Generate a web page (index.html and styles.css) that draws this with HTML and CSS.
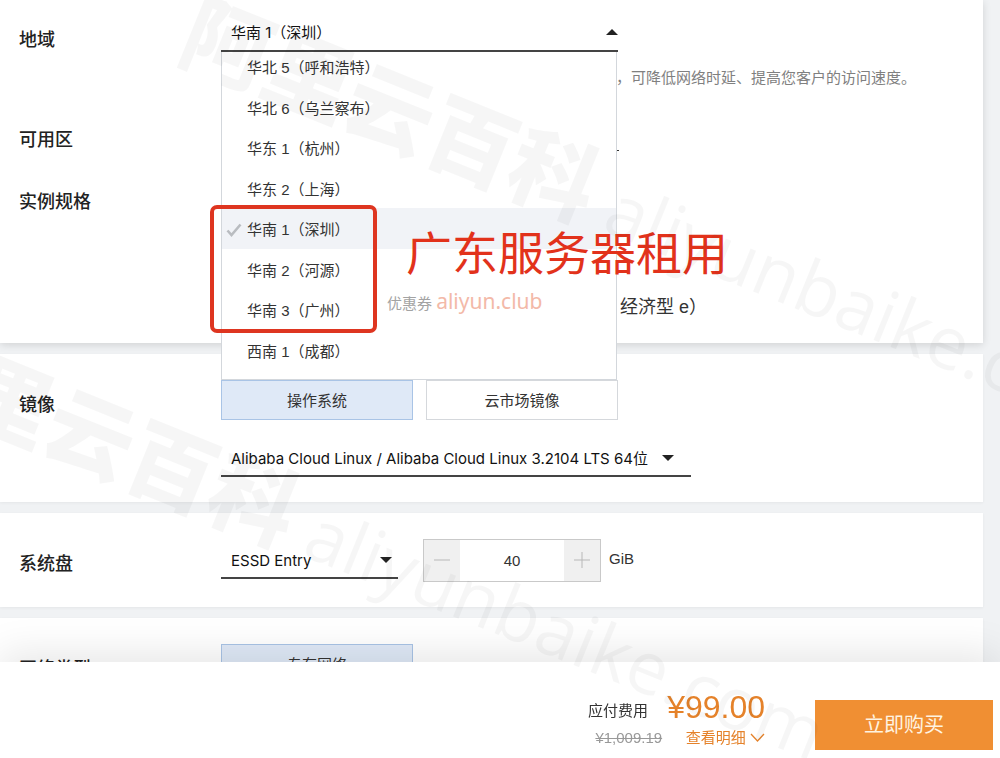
FILE: index.html
```html
<!DOCTYPE html>
<html lang="zh-CN">
    <head>
        <meta charset="UTF-8">
        <title>云服务器购买</title>
        <link rel="stylesheet" href="styles.css">
    </head>
    <body>
        <main class="page">
            <section class="card card-region">
                <div class="row">
                    <label class="label" for="region">地域</label>
                    <div class="field">
                        <div class="region">
                            <select class="select open" id="region">
                                <option>华南 1（深圳）</option>
                            </select>
                            <!--展开的地域列表-->
                            <div class="dropdown">
                                <ul class="options">
                                    <li>华北 5（呼和浩特）</li>
                                    <li>华北 6（乌兰察布）</li>
                                    <li>华东 1（杭州）</li>
                                    <li>华东 2（上海）</li>
                                    <li class="selected">
                                        <svg class="check" viewBox="0 0 16 14" width="16" height="14"><path d="M1.500 7.500l4 4.500L14.500 1.500" fill="none" stroke="#b9bcc0" stroke-width="2.600"/></svg>华南 1（深圳）
                                    </li>
                                    <li>华南 2（河源）</li>
                                    <li>华南 3（广州）</li>
                                    <li>西南 1（成都）</li>
                                </ul>
                            </div>
                        </div>
                        <p class="side tip">，可降低网络时延、提高您客户的访问速度。</p>
                    </div>
                </div>
                <div class="row">
                    <span class="label">可用区</span>
                    <div class="side"><span class="zone-line"></span></div>
                </div>
                <div class="row">
                    <span class="label">实例规格</span>
                    <p class="side spec">经济型 e）</p>
                </div>
            </section>

            <section class="card">
                <div class="row">
                    <label class="label" for="image">镜像</label>
                    <div class="field">
                        <div class="tabs">
                            <button class="tab active" type="button">操作系统</button>
                            <button class="tab" type="button">云市场镜像</button>
                        </div>
                        <select class="select select-image" id="image">
                            <option>Alibaba Cloud Linux / Alibaba Cloud Linux 3.2104 LTS 64位</option>
                        </select>
                    </div>
                </div>
            </section>

            <section class="card">
                <div class="row">
                    <label class="label" for="disk">系统盘</label>
                    <div class="field disk">
                        <select class="select select-disk" id="disk">
                            <option>ESSD Entry</option>
                        </select>
                        <div class="stepper">
                            <button type="button" aria-label="减少"><svg viewBox="0 0 16 16" width="16" height="16"><path d="M0 8h16" stroke="#b8b8b8"/></svg></button>
                            <input type="text" value="40" aria-label="系统盘容量">
                            <button type="button" aria-label="增加"><svg viewBox="0 0 16 16" width="16" height="16"><path d="M0 8h16M8 0v16" stroke="#b8b8b8"/></svg></button>
                        </div>
                        <span class="unit">GiB</span>
                    </div>
                </div>
            </section>

            <section class="card">
                <div class="row">
                    <span class="label">网络类型</span>
                    <div class="tabs">
                        <button class="tab active" type="button">专有网络</button>
                    </div>
                </div>
            </section>
        </main>

        <footer class="bar">
            <div class="fee">
                <span class="fee-name">应付费用</span>
                <strong class="price">¥99.00</strong>
                <del class="old">¥1,009.19</del>
                <a class="detail" href="#">查看明细
                    <svg viewBox="0 0 15 10" width="15" height="10"><path d="M1 1l6.500 7L14 1" fill="none" stroke="#e5822a" stroke-width="1.300"/></svg>
                </a>
            </div>
            <button class="buy" type="button">立即购买</button>
        </footer>

        <!--标注-->
        <div class="mark"></div>
        <p class="headline">广东服务器租用</p>
        <p class="coupon">优惠券 <span>aliyun.club</span></p>

        <!--水印-->
        <div class="watermark" aria-hidden="true">
            <p class="wm-first"><b>阿里云百科</b> aliyunbaike.com</p>
            <p class="wm-second"><b>阿里云百科</b> aliyunbaike.com</p>
        </div>
    </body>
</html>
```
FILE: styles.css
```css
*{
    margin: 0;
    padding: 0;
    box-sizing: border-box;
}
body{
    height: 100vh;
    overflow: hidden;
    position: relative;
    background-color: #f0f2f4;
    color: #333;
    font: 15px/24px "Liberation Sans", "Noto Sans CJK SC", sans-serif;
}
button, input, select{
    font: inherit;
    color: inherit;
}
ul{
    list-style: none;
}

/* 配置卡片 */
.page{
    display: flex;
    flex-direction: column;
    gap: 11px;
    padding-right: 17px;
}
.card{
    display: flex;
    flex-direction: column;
    gap: 38px;
    padding: 26px 0 25px 19px;
    background-color: #fff;
    box-shadow: 0 1px 3px rgba(0,0,0,0.05);
}
.card-region{
    gap: 37px;
    padding-top: 15px;
    padding-bottom: 24px;
    box-shadow: 0 2px 8px rgba(0,0,0,0.13);
}
.row{
    display: grid;
    grid-template-columns: 202px 1fr;
}
.label{
    padding-top: 1px;
    font-size: 18px;
    font-weight: 500;
    color: #222;
}
.row:first-child .label{
    padding-top: 13px;
}
.side{
    padding-left: 395px;
}
.tip{
    margin-top: 14px;
    color: #808080;
}
.spec{
    margin-top: 106px;
    padding-left: 399px;
    font-size: 18px;
}
.zone-line{
    display: block;
    width: 3px;
    height: 24px;
    border-bottom: 1px solid #333;
}

/* 下拉框 */
.select{
    display: block;
    width: 100%;
    height: 37px;
    padding: 2px 30px 0 10px;
    border: 0;
    border-bottom: 2px solid #444;
    border-radius: 0;
    appearance: none;
    background: url("data:image/svg+xml,%3Csvg xmlns='http://www.w3.org/2000/svg' width='12' height='6'%3E%3Cpath d='M0 0h12L6 6z' fill='%23222'/%3E%3C/svg%3E") no-repeat right 6px center;
    font-family: Inter, "Noto Sans CJK SC", sans-serif;
    color: #111;
}
.select.open{
    padding-top: 0;
    background-image: url("data:image/svg+xml,%3Csvg xmlns='http://www.w3.org/2000/svg' width='12' height='6'%3E%3Cpath d='M0 6h12L6 0z' fill='%23222'/%3E%3C/svg%3E");
    background-position: right 0 top 14px;
}
.region{
    position: relative;
    max-width: 397px;
}
.dropdown{
    position: absolute;
    top: 37px;
    left: 0;
    z-index: 2;
    width: 396px;
    height: 328px;
    overflow: hidden;
    background-color: #fff;
    border: 1px solid #d3d7dc;
    border-top: 0;
}
.options{
    display: flex;
    flex-direction: column;
    height: 324px;
    margin-top: -6px;
}
.options li{
    display: flex;
    flex: 1;
    align-items: center;
    padding: 4px 0 0 25px;
}
.options .selected{
    padding-left: 4px;
    gap: 5px;
    background-color: #f1f3f7;
}

.tabs{
    display: flex;
    gap: 13px;
}
.tab{
    width: 192px;
    height: 40px;
    padding-top: 2px;
    background-color: #fff;
    border: 1px solid #d5d8dc;
}
.tab.active{
    background-color: #dfe9f7;
    border-color: #a9c4e6;
}
.select-image{
    max-width: 470px;
    margin-top: 20px;
    background-position: right 17px center;
}

/* 系统盘 */
.disk{
    display: flex;
    align-items: center;
}
.select-disk{
    width: 177px;
}
.stepper{
    display: flex;
    height: 43px;
    margin: 0 8px 0 25px;
    border: 1px solid #c9c9c9;
}
.stepper button{
    width: 36px;
    padding-bottom: 4px;
    border: 0;
    background-color: #f0f0f0;
}
.stepper svg{
    vertical-align: middle;
}
.stepper input{
    width: 104px;
    border: 0;
    text-align: center;
}
.unit{
    padding-bottom: 3px;
}

/* 底部结算栏 */
.bar{
    position: fixed;
    right: 0;
    bottom: 0;
    left: 0;
    z-index: 3;
    display: flex;
    justify-content: flex-end;
    align-items: flex-end;
    gap: 50px;
    height: 96px;
    padding: 0 7px 8px 0;
    background-color: #fff;
    box-shadow: 0 -8px 40px rgba(0,0,0,0.1);
}
.fee{
    display: grid;
    grid-template-columns: auto auto;
    justify-items: end;
    align-items: center;
    column-gap: 5px;
}
.price{
    font-size: 32px;
    line-height: 38px;
    font-weight: 400;
    color: #e5822a;
}
.fee-name{
    padding: 8px 14px 0 0;
}
.old{
    color: #999;
}
.detail{
    color: #e5822a;
    text-decoration: none;
}
.buy{
    width: 178px;
    height: 50px;
    border: 0;
    background-color: #f08f33;
    color: #fff3e0;
    font-size: 20px;
}

/* 标注 */
.mark{
    position: absolute;
    top: 205px;
    left: 210px;
    z-index: 4;
    width: 167px;
    height: 128px;
    border: 4px solid #de3520;
    border-radius: 7px;
}
.headline{
    position: absolute;
    top: 224px;
    left: 406px;
    z-index: 4;
    font-size: 46px;
    line-height: 60px;
    color: #e2321b;
}
.coupon{
    position: absolute;
    top: 289px;
    left: 387px;
    z-index: 4;
    color: #a3a3a3;
}
.coupon span{
    font-family: "Noto Sans", sans-serif;
    font-size: 21px;
    color: #f3b9a8;
}

/* 水印 */
.watermark{
    position: absolute;
    inset: 0;
    z-index: 5;
    overflow: hidden;
    pointer-events: none;
    font-family: "Open Sans", "Noto Sans CJK SC", sans-serif;
    font-size: 73px;
    line-height: 88px;
    white-space: nowrap;
    color: rgba(0,0,0,0.035);
}
.watermark p{
    position: absolute;
    transform: rotate(22deg);
    transform-origin: 0 50%;
}
.watermark b{
    font-size: 88px;
    font-weight: 900;
}
.wm-first{
    top: -18px;
    left: 186px;
}
.wm-second{
    top: 307px;
    left: -114px;
}
```
